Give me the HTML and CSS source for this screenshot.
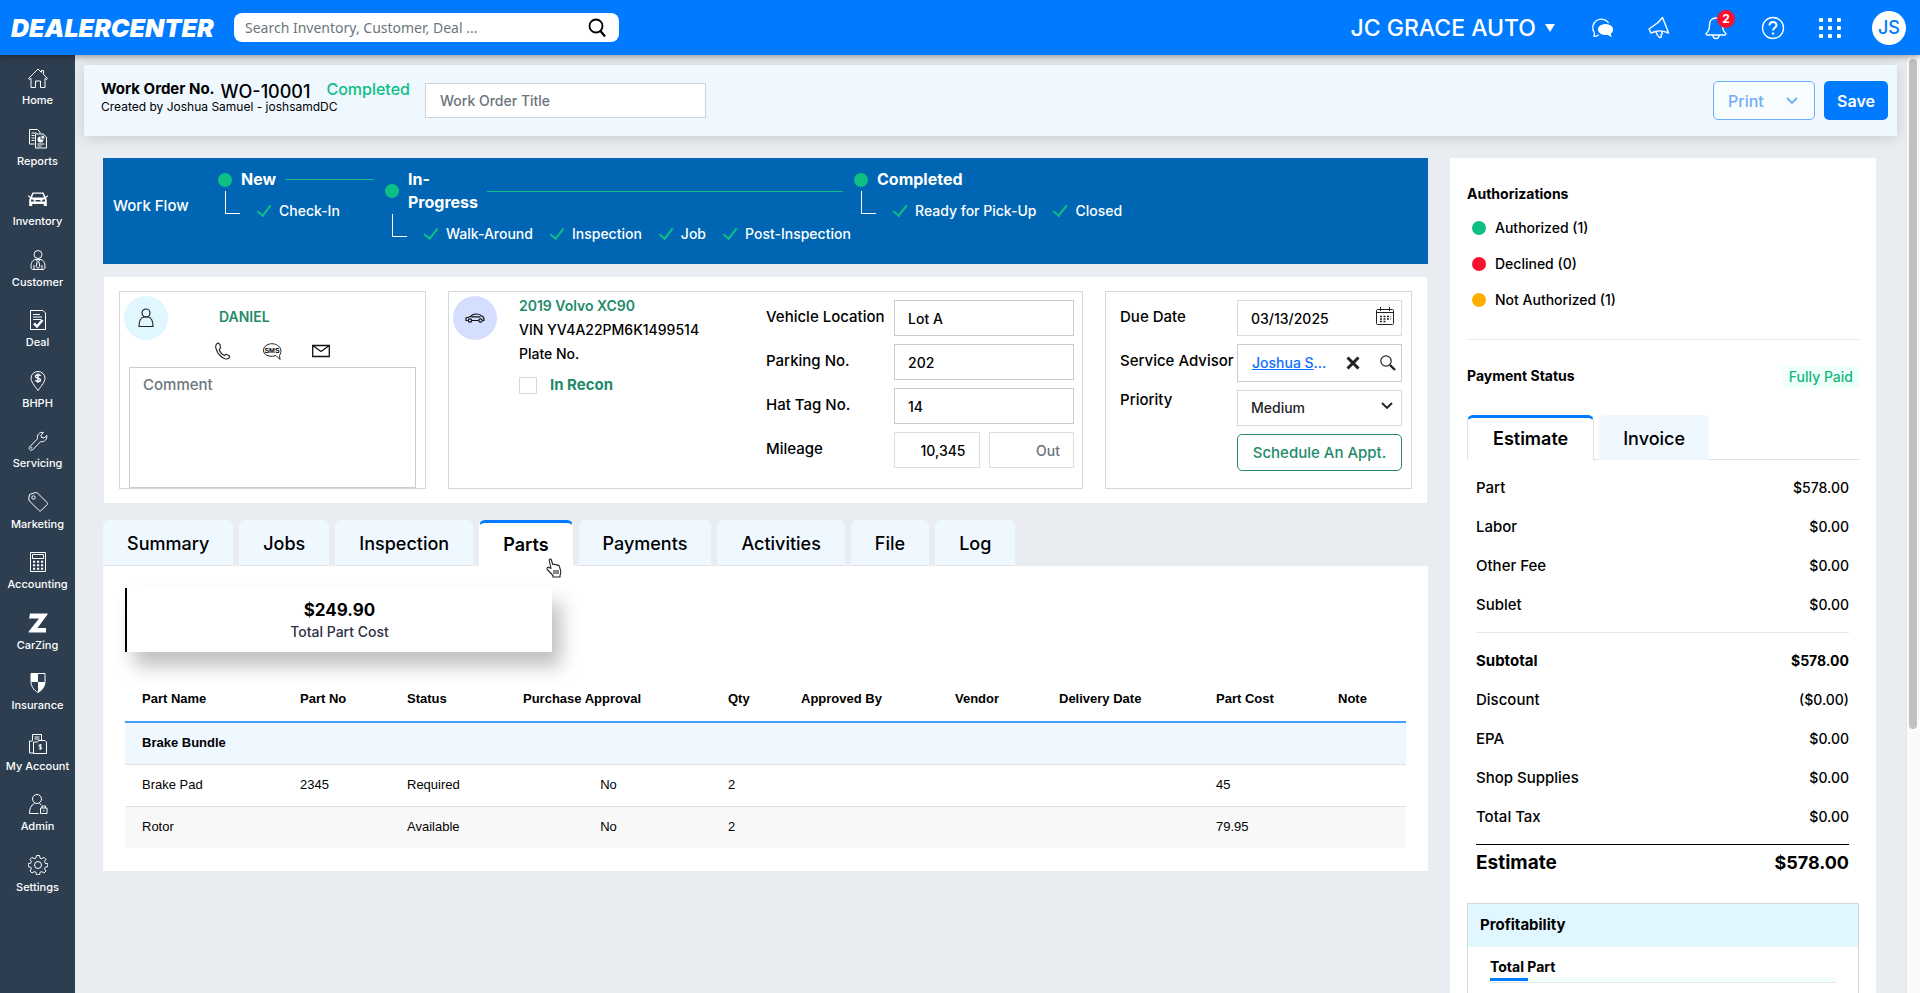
FILE: index.html
```html
<!DOCTYPE html>
<html lang="en">
<head>
<meta charset="utf-8">
<title>DealerCenter - Work Order WO-10001</title>
<link rel="stylesheet" href="styles.css">
</head>
<body>
<header class="topbar">
  <a class="logo" href="#">DEALERCENTER</a>
  <form class="search">
    <input type="text" aria-label="Search" placeholder="Search Inventory, Customer, Deal ...">
    <button type="button" aria-label="Run search"><svg width="20" height="20" viewBox="0 0 20 20" fill="none" stroke="#000" stroke-width="1.800"><circle cx="9" cy="8" r="6.500"/><path d="M13.500 13 18 18.500" stroke-width="2.200"/></svg></button>
  </form>
  <button class="dealer" type="button">JC GRACE AUTO <svg width="10" height="8" viewBox="0 0 10 8"><path d="M0 0h10L5 8z" fill="#fff"/></svg></button>
  <div class="tools">
    <button type="button" aria-label="Chat"><svg width="24" height="24" viewBox="0 0 24 24" fill="none" stroke="#fff" stroke-width="1.200"><path d="M3.500 20.500c1-1.200 1.300-2.500.7-3.800A8.700 8.700 0 1 1 18.700 7M3.500 20.500c2 0 4-.6 5.300-1.800"/><path d="M15.500 8.500c4 0 7 2.200 7 5 0 1.700-.9 3-2.300 3.900l.5 2.600-2.900-1.700c-5.300.7-9.300-1.500-9.300-4.800 0-2.800 3-5 7-5z" fill="#fff"/></svg></button>
    <button type="button" aria-label="Announcements"><svg width="24" height="24" viewBox="0 0 24 24" fill="none" stroke="#fff" stroke-width="1.400" stroke-linejoin="round"><path d="M15.500 1.500c2 5 4 9.500 6 15.500-5-2-10-2.500-13-1.500L4 17l-2-4 3.500-2.500C10 8 13 5 15.500 1.500z"/><path d="M9 15.500c.5 2.500 1.500 4.500 3.500 6l2-.5-.5-2.500 1.500-.8-1.200-2.200"/></svg></button>
    <button type="button" aria-label="Notifications"><svg width="24" height="26" viewBox="0 0 24 26" fill="none" stroke="#fff" stroke-width="1.400"><path d="M12 3c-4.500 0-6.500 3-6.500 7 0 5-1 6.500-3 8-.8.800-.3 2 .8 2h17.400c1.100 0 1.600-1.200.8-2-2-1.500-3-3-3-8 0-4-2-7-6.500-7zM9 20.500c0 4 6 4 6 0"/></svg><span class="badge">2</span></button>
    <button type="button" aria-label="Help"><svg width="24" height="24" viewBox="0 0 24 24" fill="none" stroke="#fff"><circle cx="12" cy="12" r="10.500" stroke-width="1.300"/><path d="M8.500 9.500c0-4.500 7-4.500 7-.3 0 2.600-3.500 2.600-3.500 5.300" stroke-width="2"/><circle cx="12" cy="17.500" r=".8" fill="#fff"/></svg></button>
    <button type="button" aria-label="Apps"><svg width="24" height="24" viewBox="0 0 24 24" fill="#fff"><rect x="1" y="2" width="4" height="4" rx="1"/><rect x="10" y="2" width="4" height="4" rx="1"/><rect x="19" y="2" width="4" height="4" rx="1"/><rect x="1" y="10" width="4" height="4" rx="1"/><rect x="10" y="10" width="4" height="4" rx="1"/><rect x="19" y="10" width="4" height="4" rx="1"/><rect x="1" y="18" width="4" height="4" rx="1"/><rect x="10" y="18" width="4" height="4" rx="1"/><rect x="19" y="18" width="4" height="4" rx="1"/></svg></button>
    <button type="button" class="user">JS</button>
  </div>
</header>
<div class="shell">
<nav class="sidebar">
  <a href="#"><svg viewBox="0 0 20 20"><path d="M.5 10.500 10 1l3.500 3.500V2.500H15.500V6.500l4 4-.8.900-1.700-.9V19.500h-4.500v-6.500h-5v6.500H3v-9l-1.700.9z"/></svg>Home</a>
  <a href="#"><svg viewBox="0 0 20 20"><path d="M6.500 15H1.500V.500h8l2.500 2.500v1.500M3.500 4h5M3.500 6.500h3M3.500 9h3M3.500 11.500h3M7.500 5h7.500l3.500 3v11h-11zM9.500 15h7M9.500 17h4"/><path class="solid" d="M12.500 7.500a3 3 0 1 0 3 3h-3zM13.500 6.500v3h3a3 3 0 0 0-3-3z"/></svg>Reports</a>
  <a href="#"><svg viewBox="0 0 20 20"><path class="solid" d="M4.500 3.500h11l2 4.200 2.300-1.500.2 1.300-2 1.200.8 2v6.300h-3v-2H4.200v2h-3v-6.300l.8-2-2-1.200.2-1.300 2.300 1.500zM5.500 4.700 4 8.500h12l-1.500-3.800zM3 10.500v2h3.500l-1.500-2zm14 0h-2l-1.500 2H17zM7.500 11v1.500h5V11z" fill-rule="evenodd"/></svg>Inventory</a>
  <a href="#"><svg viewBox="0 0 20 20"><circle cx="10" cy="4.500" r="4"/><path d="M3 17c0-5 2-7.500 5-7.500h4c3 0 5 2.500 5 7.500 0 2-1 2.500-2 2.500H5c-1 0-2-.5-2-2.500zM6 19v-4M14 19v-4"/><path d="M8.500 9.500h3l-.7 2 1 5-1.800 2-1.800-2 1-5z"/></svg>Customer</a>
  <a href="#"><svg viewBox="0 0 20 20"><path d="M2.500.500h12.500l2.500 2.500v16.500h-15zM5 4.500h7M5 7h9M5 9.500h8"/><path d="m6 13.500 3 3 5.500-6.500" stroke-width="2.500"/></svg>Deal</a>
  <a href="#"><svg viewBox="0 0 20 20"><path d="M10 19.500C6 14 3 10.500 3 7.200a7 6.700 0 0 1 14 0C17 10.500 14 14 10 19.500z"/><path d="M12.500 5c-.5-1.700-5-1.700-5 .4 0 2.200 5 1.300 5 3.500 0 2-4.500 2-5 .2M10 2.500V12" stroke-width="1.400"/></svg>BHPH</a>
  <a href="#"><svg viewBox="0 0 20 20"><path d="m1.500 16 8-8.200C8.800 4 11.500.500 15.500 1.500L13 4l.5 2.500L16 7l2.800-2.500C19.500 8 16.500 11.500 12.500 10.700L4.500 19c-2 1.200-4.200-1-3-3z"/><circle cx="3.500" cy="16.800" r=".5"/></svg>Servicing</a>
  <a href="#"><svg viewBox="0 0 20 20"><path d="M1.500 2.500 7.500.500l2 .500 9.500 9.500c.7.700.7 1.500 0 2.200l-5.800 5.800c-.7.700-1.500.7-2.200 0L1.500 9 .700 7z"/><circle cx="5.500" cy="5.500" r="1.700"/></svg>Marketing</a>
  <a href="#"><svg viewBox="0 0 20 20"><path d="M2.500.500h15v19h-15zM4.500 2.500h11v4h-11z"/><path class="dots" d="M5 9.800h2.200M9 9.800h2.200M13 9.800h2.200M5 13.300h2.200M9 13.300h2.200M13 13.300h2.200M5 16.800h2.200M9 16.800h2.200M13 16.800h2.200"/></svg>Accounting</a>
  <a href="#"><svg viewBox="0 0 20 20"><path class="solid" d="M2 .500h17.500v1L9.500 15h8.500v4.500H.700v-1L11 5.500H1z"/></svg>CarZing</a>
  <a href="#"><svg viewBox="0 0 20 20"><path d="M3 .500h14v8c0 4.500-2.500 8.500-7 11-4.500-2.500-7-6.500-7-11z"/><path class="solid" d="M3 1h7v8H3zM10 9h7c-.3 4.500-3 8.500-7 10.500z"/></svg>Insurance</a>
  <a href="#"><svg viewBox="0 0 20 20"><path d="M4.500 6.500v-6h9v6M6.500 3h5M6.500 5h5M18.500 8v11.500h-13V8h4l1-1.500h6.500zM5 19H1.500V7h3"/><path d="M13.800 11.500c-.5-1-3-1-3 .3s3 .9 3 2.200-2.500 1.400-3 .2M12.300 10v6"/></svg>My Account</a>
  <a href="#"><svg viewBox="0 0 20 20"><circle cx="9" cy="5" r="4.500"/><path d="M10.500 19.500h-9c0-5 1.500-8.500 5-10M11.500 9.500l2 1.500M12.500 14h6.500v5.500h-6.500zM14 14v-2h3.500v2M15.700 16v1.500"/></svg>Admin</a>
  <a href="#"><svg viewBox="0 0 20 20"><circle cx="10" cy="10" r="3.500"/><path d="m8.500.500h3l.5 2.500 1.800.8L16 2.300 18 4.400l-1.500 2.100.8 1.800 2.500.4v3l-2.500.5-.8 1.700L18 16l-2.100 2-2.100-1.400-1.800.7-.5 2.500h-3L8 17.300l-1.800-.7L4 18l-2-2 1.400-2.200-.7-1.700-2.500-.4v-3l2.500-.5.700-1.700L2 4.400 4 2.300l2.200 1.400L8 3z"/></svg>Settings</a>
</nav>
<main class="content">
  <section class="order-head">
    <div class="order-id">
      <div class="order-line"><strong>Work Order No.</strong><span class="number">WO-10001</span><span class="state">Completed</span></div>
      <div class="created">Created by Joshua Samuel - joshsamdDC</div>
    </div>
    <input class="title-input" type="text" aria-label="Work Order Title" placeholder="Work Order Title">
    <button type="button" class="btn print">Print <svg width="12" height="8" viewBox="0 0 12 8" fill="none" stroke="currentColor" stroke-width="1.800"><path d="m1 1 5 5 5-5"/></svg></button>
    <button type="button" class="btn save">Save</button>
  </section>
  <div class="columns">
    <div class="primary">
      <section class="workflow">
        <div class="wf-name">Work Flow</div>
        <div class="stage">
          <div class="stage-head"><i class="dot"></i><b>New</b><i class="line"></i></div>
          <div class="steps"><i class="elbow"></i><span class="step">Check-In</span></div>
        </div>
        <div class="stage wide">
          <div class="stage-head"><i class="dot"></i><b>In-<br>Progress</b><i class="line"></i></div>
          <div class="steps"><i class="elbow"></i><span class="step">Walk-Around</span><span class="step">Inspection</span><span class="step">Job</span><span class="step">Post-Inspection</span></div>
        </div>
        <div class="stage last">
          <div class="stage-head"><i class="dot"></i><b>Completed</b></div>
          <div class="steps"><i class="elbow"></i><span class="step">Ready for Pick-Up</span><span class="step">Closed</span></div>
        </div>
      </section>
      <section class="cards">
        <div class="card customer">
          <div class="customer-top">
            <span class="round cyan"><svg width="16" height="20" viewBox="0 0 16 20" fill="none" stroke="#222" stroke-width="1.200"><circle cx="8" cy="5" r="4"/><path d="M1 18.500c0-5.500 1.500-9 5-9.500h4c3.500.500 5 4 5 9.500z"/></svg></span>
            <div class="customer-info">
              <a class="green" href="#">DANIEL</a>
              <div class="contact">
                <button type="button" aria-label="Call"><svg width="18" height="18" viewBox="0 0 18 18" fill="none" stroke="#222" stroke-width="1.100"><path d="M4 1c-2 .8-2.700 3-2 5.500C3.200 11 6.500 15 11 16.700c2 .6 3.800 0 4.700-1.700l-.7-1.500-3-1.200-1.500 1.200C8 12.500 6 10 5.200 7.500L6.500 6 6 2.500z"/></svg></button>
                <button type="button" aria-label="SMS"><svg width="20" height="18" viewBox="0 0 20 18"><path d="M17.500 13.500c5-8-4-13-10-11.500C-.5 4-.5 12.500 7 14c2.500.5 5 .2 7-.5l4 4z" fill="none" stroke="#222"/><text x="10" y="10.500" class="sms">SMS</text></svg></button>
                <button type="button" aria-label="Email"><svg width="18" height="14" viewBox="0 0 18 14" fill="none" stroke="#111" stroke-width="1.300"><path d="M.7 1.500h16.600v11H.7zM.7 1.500 9 7.500l8.300-6"/></svg></button>
              </div>
            </div>
          </div>
          <textarea aria-label="Comment" placeholder="Comment"></textarea>
        </div>
        <div class="card vehicle">
          <span class="round violet"><svg width="20" height="10" viewBox="0 0 20 10" fill="none" stroke="#111" stroke-width="1.200"><path d="M2.800 7.500H1V5l4-1.200C7 1.500 9 .8 12 1c2.500 0 4 1.200 5.500 2.500 1.500.5 1.700 1.500 1.500 4h-1.200M7 7.500h6.500M6.500 3.800h9"/><circle cx="5" cy="7.500" r="1.700"/><circle cx="15.500" cy="7.500" r="1.700"/></svg></span>
          <div class="vehicle-info">
            <a class="green" href="#">2019 Volvo XC90</a>
            <span>VIN YV4A22PM6K1499514</span>
            <span>Plate No.</span>
            <label class="recon"><input type="checkbox"> In Recon</label>
          </div>
          <div class="fields">
            <label for="loc">Vehicle Location</label><input id="loc" type="text" value="Lot A">
            <label for="park">Parking No.</label><input id="park" type="text" value="202">
            <label for="hat">Hat Tag No.</label><input id="hat" type="text" value="14">
            <label for="mile">Mileage</label>
            <div class="pair"><input id="mile" type="text" value="10,345"><input type="text" aria-label="Mileage out" placeholder="Out"></div>
          </div>
        </div>
        <div class="card fields schedule">
          <label for="due">Due Date</label>
          <div class="box"><input id="due" type="text" value="03/13/2025"><button type="button" aria-label="Pick date"><svg width="18" height="18" viewBox="0 0 18 18" fill="none" stroke="#222"><rect x=".5" y="2.500" width="17" height="15" rx="1"/><path d="M.5 5.500h17M4.500 0v4M13.500 0v4"/><path d="M4 9.500h11M4 12h11M4 14.500h7" stroke-width="1.300" stroke-dasharray="2 1.500"/></svg></button></div>
          <span>Service Advisor</span>
          <div class="box advisor"><span class="who"><a href="#">Joshua S</a>...</span><button type="button" aria-label="Clear advisor"><svg width="14" height="14" viewBox="0 0 14 14" stroke="#222" stroke-width="3"><path d="m1.500 1.500 11 11M12.500 1.500l-11 11"/></svg></button><button type="button" aria-label="Find advisor"><svg width="16" height="16" viewBox="0 0 16 16" fill="none" stroke="#222"><circle cx="6" cy="6" r="5.200" stroke-width="1.200"/><path d="m10 10 5 5" stroke-width="2.400"/></svg></button></div>
          <label class="raised" for="prio">Priority</label>
          <div class="box"><select id="prio"><option>Medium</option></select><svg class="chev" width="12" height="8" viewBox="0 0 12 8" fill="none" stroke="#222" stroke-width="1.900"><path d="m1 1 5 5 5-5"/></svg></div>
          <button type="button" class="appt">Schedule An Appt.</button>
        </div>
      </section>
      <div class="tabs">
        <button type="button">Summary</button><button type="button">Jobs</button><button type="button">Inspection</button><button type="button" class="on">Parts<svg class="hand" width="16" height="20" viewBox="0 0 16 20" fill="#fff" stroke="#222" stroke-width="1.100" stroke-linejoin="round"><path d="M5 10.500 3.300 2.500C3 .800 5 .500 5.400 2l1.300 4.500c.6-.8 2-.6 2.200.4.700-.7 2-.4 2.200.6.900-.7 2-.2 2.300 1l1.200 4c.5 2 .2 3.200-.6 5v1.500H7V17.500L1.300 11.500C.3 10 2 8.500 3.200 9.600z"/><path d="M8 12v4M10 12v4M12 12v4" fill="none"/></svg></button><button type="button">Payments</button><button type="button">Activities</button><button type="button">File</button><button type="button">Log</button>
      </div>
      <section class="panel">
        <div class="stat"><strong>$249.90</strong><span>Total Part Cost</span></div>
        <table class="parts">
          <colgroup><col class="c1"><col class="c2"><col class="c3"><col class="c4"><col class="c5"><col class="c6"><col class="c7"><col class="c8"><col class="c9"><col class="c10"></colgroup>
          <thead><tr><th>Part Name</th><th>Part No</th><th>Status</th><th>Purchase Approval</th><th>Qty</th><th>Approved By</th><th>Vendor</th><th>Delivery Date</th><th>Part Cost</th><th>Note</th></tr></thead>
          <tbody>
            <tr class="group"><td colspan="10">Brake Bundle</td></tr>
            <tr><td>Brake Pad</td><td>2345</td><td>Required</td><td class="mid">No</td><td>2</td><td></td><td></td><td></td><td>45</td><td></td></tr>
            <tr class="alt"><td>Rotor</td><td></td><td>Available</td><td class="mid">No</td><td>2</td><td></td><td></td><td></td><td>79.95</td><td></td></tr>
          </tbody>
        </table>
      </section>
    </div>
    <aside class="summary">
      <h2>Authorizations</h2>
      <ul class="auth">
        <li><i class="dot"></i>Authorized (1)</li>
        <li><i class="dot red"></i>Declined (0)</li>
        <li><i class="dot amber"></i>Not Authorized (1)</li>
      </ul>
      <div class="payment"><h2>Payment Status</h2><span class="paid">Fully Paid</span></div>
      <div class="tabs side"><button type="button" class="on">Estimate</button><button type="button">Invoice</button></div>
      <dl class="totals">
        <div><dt>Part</dt><dd>$578.00</dd></div>
        <div><dt>Labor</dt><dd>$0.00</dd></div>
        <div><dt>Other Fee</dt><dd>$0.00</dd></div>
        <div><dt>Sublet</dt><dd>$0.00</dd></div>
        <div class="sub"><dt>Subtotal</dt><dd>$578.00</dd></div>
        <div><dt>Discount</dt><dd>($0.00)</dd></div>
        <div><dt>EPA</dt><dd>$0.00</dd></div>
        <div><dt>Shop Supplies</dt><dd>$0.00</dd></div>
        <div><dt>Total Tax</dt><dd>$0.00</dd></div>
        <div class="grand"><dt>Estimate</dt><dd>$578.00</dd></div>
      </dl>
      <div class="profit">
        <h2>Profitability</h2>
        <div class="profit-body"><h3>Total Part</h3><div class="meter"><i></i></div></div>
      </div>
    </aside>
  </div>
</main>
<div class="scrollbar"><i></i></div>
</div>
</body>
</html>
```
FILE: styles.css
```css
* { box-sizing: border-box; }
body {
  margin: 0;
  height: 100vh;
  display: flex;
  flex-direction: column;
  overflow: hidden;
  background: #e9edf2;
  color: #000;
  font: 500 14px/20px Inter, "Open Sans", sans-serif;
}
button, input, select, textarea { font: inherit; color: inherit; margin: 0; border-radius: 0; }
button { border: 0; padding: 0; background: none; cursor: pointer; }
a { color: inherit; text-decoration: none; }
svg { display: block; flex: none; }
h2, h3 { margin: 0; font-size: 14px; line-height: 20px; font-weight: 700; }
ul, dl, dd { margin: 0; padding: 0; list-style: none; }
::placeholder { color: #6c757d; opacity: 1; }

/* Top bar */
.topbar {
  position: relative;
  z-index: 2;
  flex: none;
  display: flex;
  align-items: center;
  height: 55px;
  padding: 0 14px 0 11px;
  background: #007bff;
  color: #fff;
  box-shadow: 0 2px 6px rgba(0, 0, 0, .35);
}
.logo { width: 223px; font-size: 25px; line-height: 32px; font-weight: 900; font-style: italic; }
.search { display: flex; align-items: center; width: 385px; height: 29px; padding: 0 12px 0 11px; border-radius: 8px; background: #fff; }
.search input { flex: 1; min-width: 0; border: 0; padding: 0; background: none; outline: 0; color: #333; font: 400 14px/20px "Noto Sans", sans-serif; }
.dealer { display: flex; align-items: center; gap: 9px; margin-left: auto; font-size: 23px; line-height: 28px; }
.tools { display: flex; align-items: center; gap: 33px; margin-left: 35px; }
.tools button { position: relative; width: 24px; display: grid; place-items: center; }
.tools .user { width: 34px; height: 34px; margin-left: -3px; border-radius: 50%; background: #fff; color: #007bff; font-size: 18px; }
.badge { position: absolute; top: -5px; right: -7px; width: 18px; height: 18px; border-radius: 50%; background: #f8102e; font-size: 12px; line-height: 18px; font-weight: 700; text-align: center; }

/* Frame */
.shell { flex: 1; min-height: 0; display: flex; }
.sidebar { flex: none; width: 75px; display: flex; flex-direction: column; padding: 13px 0 78px; background: #2d3e50; color: #fff; }
.sidebar a { flex: 1 1 0; display: flex; flex-direction: column; align-items: center; gap: 4px; font-size: 11px; line-height: 16px; }
.sidebar svg { width: 20px; height: 20px; fill: none; stroke: #fff; stroke-width: 1; }
.sidebar .solid { fill: #fff; stroke: none; }
.sidebar .dots { stroke-width: 2; }
.content { flex: 1; min-width: 0; overflow-y: auto; scrollbar-width: none; padding: 10px 9px 0; }
.scrollbar { flex: none; width: 14px; padding: 4px 2px; background: #fafafa; border-left: 1px solid #e8e8e8; }
.scrollbar i { display: block; width: 8px; height: 72%; border-radius: 4px; background: #c1c1c1; }

/* Order header */
.order-head { display: flex; align-items: center; height: 71px; padding: 0 9px 0 17px; background: #eff7ff; box-shadow: 0 2px 14px rgba(0, 0, 0, .14); }
.order-id { width: 324px; padding-bottom: 8px; white-space: nowrap; }
.order-line { display: flex; align-items: flex-start; line-height: 20px; font-size: 15px; }
.order-line .number { margin-left: 6px; padding-top: 3px; font-size: 18px; }
.order-line .state { margin-left: 16px; font-size: 16px; color: #0dbf83; }
.created { margin-top: -2px; font-size: 12px; line-height: 14px; font-weight: 400; }
.title-input { width: 281px; height: 35px; padding: 0 14px; border: 1px solid #ced4da; background: #fff; }
.btn { height: 39px; border-radius: 5px; font-size: 16px; }
.print { display: flex; align-items: center; justify-content: space-between; width: 102px; margin-left: auto; padding: 0 16px 0 14px; border: 1px solid #6cacfb; background: #f7fcff; color: #76acf5; }
.save { width: 64px; margin-left: 9px; background: #007bff; color: #fff; font-weight: 600; }

.columns { display: flex; align-items: flex-start; gap: 22px; padding: 22px 21px 0 19px; }
.primary { flex: 1; min-width: 0; }

/* Work flow */
.workflow { display: flex; min-height: 106px; padding: 10px; background: #0066b3; color: #fff; }
.wf-name { width: 105px; align-self: center; line-height: 20px; padding-bottom: 10px; font-size: 15px; }
.stage { width: 167px; }
.stage.wide { width: 469px; }
.stage.last { flex: 1; }
.stage-head { display: flex; align-items: center; gap: 9px; padding-right: 11px; font-size: 16px; line-height: 23px; }
.stage-head b { font-weight: 700; }
.dot { flex: none; width: 14px; height: 14px; border-radius: 50%; background: #0dbf83; }
.dot.red { background: #f8102e; }
.dot.amber { background: #ffae00; }
.line { flex: 1; height: 1px; background: #0dbf83; }
.steps { display: flex; gap: 16px; padding-left: 7px; white-space: nowrap; }
.elbow { width: 15px; height: 23px; border: solid #fff; border-width: 0 0 1px 1px; }
.step { display: flex; align-items: center; gap: 7px; font-size: 14px; line-height: 20px; padding-top: 8px; height: 32px; }
.step::before { content: ""; width: 6px; height: 12px; margin: 0 4px 4px 4px; border: solid #0dbf83; border-width: 0 2px 2px 0; transform: rotate(38deg); }

/* Detail cards */
.cards { display: grid; grid-template-columns: minmax(0, 29fr) minmax(0, 60fr) minmax(0, 29fr); gap: 22px; margin: 13px 1px 17px; padding: 14px 15px; background: #fff; }
.card { min-height: 198px; border: 1px solid #d6d8dc; }
.green { color: #248a6b; font-weight: 600; }
.round { flex: none; display: grid; place-items: center; width: 44px; height: 44px; border-radius: 50%; }
.cyan { background: #e1f7ff; }
.violet { background: #d4deff; }
.customer { display: flex; flex-direction: column; padding: 4px 9px 0; }
.customer-top { display: flex; margin-left: -5px; gap: 46px; }
.customer-info { display: flex; flex-direction: column; padding: 11px 0 0 5px; }
.contact { display: flex; align-items: center; gap: 30px; height: 20px; margin: 14px 0 0 -5px; }
.sms { font: 700 7px "Liberation Sans", sans-serif; text-anchor: middle; }
.customer textarea { flex: 1; margin-top: 6px; padding: 7px 13px; border: 1px solid #c9cdd3; resize: none; font-size: 15px; }
.vehicle { display: flex; padding: 4px 8px 4px 4px; }
.vehicle-info { display: flex; flex-direction: column; gap: 4px; margin-left: 22px; white-space: nowrap; }
.recon { display: flex; align-items: center; gap: 13px; margin-top: 7px; color: #248a6b; font-size: 15px; font-weight: 700; }
.recon input { appearance: none; width: 18px; height: 17px; border: 1px solid #d6d8dc; background: #fff; }
.fields { display: grid; grid-template-columns: 128px 180px; grid-auto-rows: 36px; row-gap: 8px; align-content: start; font-size: 15px; white-space: nowrap; }
.fields > label, .fields > span { line-height: 34px; }
.vehicle .fields { margin: 4px 0 0 auto; }
.fields input { width: 100%; height: 36px; padding: 0 13px; border: 1px solid #c9cdd3; background: #fff; font-size: 14px; }
.pair { display: grid; grid-template-columns: 1fr 1fr; gap: 9px; }
.pair input { border-color: #dcdee2; text-align: right; }
.schedule { grid-template-columns: minmax(0, 1fr) 165px; grid-template-rows: 36px 38px 36px 37px; padding: 8px 9px 0 14px; }
.box { position: relative; display: flex; align-items: center; border: 1px solid #d9dbe0; }
.box input, .box select { flex: 1; min-width: 0; height: 100%; padding: 0 13px; border: 0; outline: 0; appearance: none; background: none; font-size: 14px; }
.box select { color: #212529; }
.box > button { position: absolute; right: 7px; top: 6px; }
.chev { position: absolute; right: 8px; top: 11px; pointer-events: none; }
.advisor { gap: 20px; padding: 0 9px 0 14px; border-color: #c9cdd3; }
.who { flex: 1; color: #0d6efd; font-size: 14px; }
.who a { text-decoration: underline; }
.advisor > button { position: static; }
.fields > .raised { line-height: 20px; }
.appt { grid-column: 2; border: 1px solid #248a6b; border-radius: 5px; color: #248a6b; font-size: 15px; }

/* Tabs */
.tabs { display: flex; gap: 6px; }
.tabs button { position: relative; height: 46px; padding: 2px 23px 0; border: 1px solid transparent; border-bottom-color: #dee2e6; border-radius: 6px 6px 0 0; background: #eff7ff; font-size: 18px; line-height: 24px; }
.tabs .on { padding-top: 0; border-top: 3px solid #007bff; border-bottom: 0; background: #fff; font-weight: 600; }
.hand { position: absolute; right: 10px; bottom: -12px; z-index: 1; }
.panel { min-height: 305px; padding: 22px; background: #fff; }
.stat { display: flex; flex-direction: column; align-items: center; gap: 2px; width: 427px; height: 64px; padding-top: 11px; border-left: 2px solid #000; background: #fff; box-shadow: 9px 14px 18px rgba(0, 0, 0, .25); }
.stat strong { font-size: 17px; line-height: 22px; }
.stat span { line-height: 18px; color: #2f3045; }
.parts { width: 100%; margin-top: 24px; border-collapse: collapse; table-layout: fixed; font: 400 13px/18px "Liberation Sans", Arial, sans-serif; }
.parts th, .parts td { height: 42px; padding: 0 17px; text-align: left; white-space: nowrap; border-bottom: 1px solid #dee2e6; }
.parts th { height: 46px; border-bottom: 2px solid #479dff; }
.parts .group td { background: #eff7ff; font-weight: 700; }
.parts .alt td { background: #f8f8f8; border-bottom: 0; }
.parts .mid { text-align: center; }
.c1 { width: 158px; } .c2 { width: 107px; } .c3 { width: 116px; } .c4 { width: 205px; } .c5 { width: 73px; }
.c6 { width: 154px; } .c7 { width: 104px; } .c8 { width: 157px; } .c9 { width: 122px; } .c10 { width: 85px; }

/* Summary column */
.summary { flex: none; width: 426px; padding: 26px 17px 40px; background: #fff; }
.auth { display: grid; gap: 16px; padding: 14px 5px 29px; margin-bottom: 26px; border-bottom: 1px solid #e6e6e6; }
.auth li { display: flex; align-items: center; gap: 9px; }
.payment { display: flex; justify-content: space-between; margin-bottom: 27px; }
.paid { height: 22px; padding: 0 6px; background: #effffa; color: #14b77a; line-height: 22px; }
.side { border-bottom: 1px solid #dee2e6; gap: 5px; }
.side button { height: 45px; margin-bottom: -1px; border-bottom: 0; }
.side .on { padding: 0 25px; border-left-color: #dee2e6; border-right-color: #dee2e6; }
.totals { padding: 8px 10px 0 9px; }
.totals div { display: flex; justify-content: space-between; line-height: 39px; }
.totals dt { font-size: 15px; }
.totals .sub { margin-top: 8px; padding-top: 8px; border-top: 1px solid #e6e6e6; font-weight: 700; }
.totals .grand { margin-top: 8px; border-top: 1px solid #000; font-size: 18px; line-height: 36px; font-weight: 700; }
.totals .grand dt { font-size: 19px; }
.profit { margin-top: 22px; border: 1px solid #d6d8dc; }
.profit h2 { padding: 11px 12px 12px; background: #e1f7ff; font-size: 15px; }
.profit-body { padding: 10px 22px 80px; }
.meter { height: 5px; margin-top: 1px; background: #effffa; border-bottom: 1px solid #e6e6e6; }
.meter i { display: block; width: 11%; height: 3px; background: #007bff; }
```
